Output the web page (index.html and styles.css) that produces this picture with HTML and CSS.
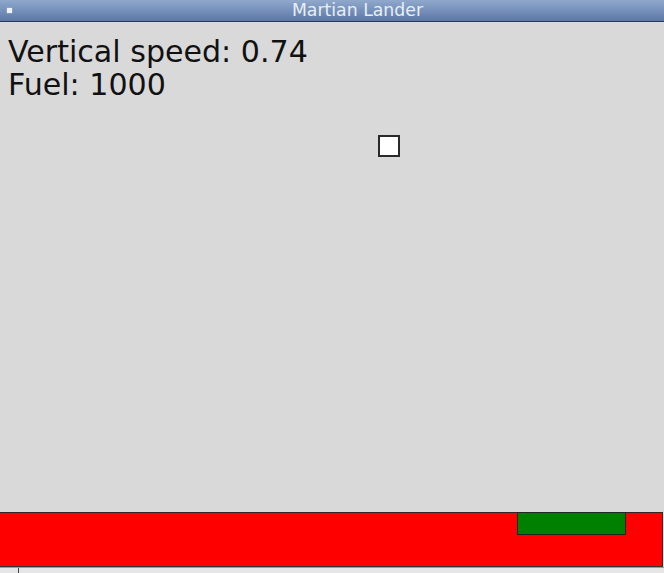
FILE: index.html
```html
<!DOCTYPE html>
<html>
<head>
<meta charset="utf-8">
<title>Martian Lander</title>
<link rel="stylesheet" href="styles.css">
</head>
<body>
<div class="window">
  <div class="titlebar">
    <span class="win-icon"></span>
    <span class="title">Martian Lander</span>
  </div>
  <div class="canvas">
    <div class="hud">
      <div class="hud-line">Vertical speed: 0.74</div>
      <div class="hud-line">Fuel: 1000</div>
    </div>
    <div class="lander"></div>
    <div class="ground">
      <div class="pad"></div>
    </div>
  </div>
  <div class="statusbar"><span class="tick"></span></div>
</div>
</body>
</html>
```
FILE: styles.css
```css
html, body {
  margin: 0;
  padding: 0;
  width: 664px;
  height: 573px;
  overflow: hidden;
  background: #d9d9d9;
}
.window {
  display: flex;
  flex-direction: column;
  width: 664px;
  height: 573px;
  font-family: "DejaVu Sans", "Liberation Sans", sans-serif;
}
.titlebar {
  display: flex;
  align-items: center;
  height: 21px;
  border-bottom: 1px solid #2c3a55;
  background: linear-gradient(to bottom, #90a8cb 0%, #7590ba 50%, #5c77a3 100%);
}
.win-icon {
  width: 5px;
  height: 5px;
  margin-left: 7px;
  margin-top: -1px;
  background: #eef2fa;
  box-shadow: 0 0 1px #dfe6f3;
}
.title {
  flex: 1;
  text-align: center;
  padding-left: 39px;
  font-size: 17.3px;
  line-height: 21px;
  color: #e9eef6;
}
.canvas {
  position: relative;
  flex: 1;
  display: flex;
  flex-direction: column;
  background: #d9d9d9;
}
.hud {
  flex: 1;
  padding: 13px 0 0 8px;
  font-size: 30.1px;
  line-height: 33px;
  color: #111;
}
.lander {
  position: absolute;
  left: 378px;
  top: 113px;
  width: 18px;
  height: 18px;
  border: 2px solid #2a2a2a;
  background: #ffffff;
}
.ground {
  display: flex;
  justify-content: flex-end;
  align-items: flex-start;
  width: 662px;
  height: 53px;
  background: #ff0000;
  border-top: 1px solid #3a2222;
  border-bottom: 1px solid #3a3030;
  border-right: 1px solid #3a2a2a;
}
.pad {
  width: 107px;
  height: 21px;
  margin-top: -1px;
  margin-right: 36px;
  background: #008000;
  border: 1px solid #1e2a1e;
}
.statusbar {
  height: 5px;
  background: #e6e6e6;
  border-top: 1px solid #9a9a9a;
  display: flex;
}
.tick {
  width: 1px;
  height: 5px;
  margin-left: 18px;
  background: #444;
}
```
